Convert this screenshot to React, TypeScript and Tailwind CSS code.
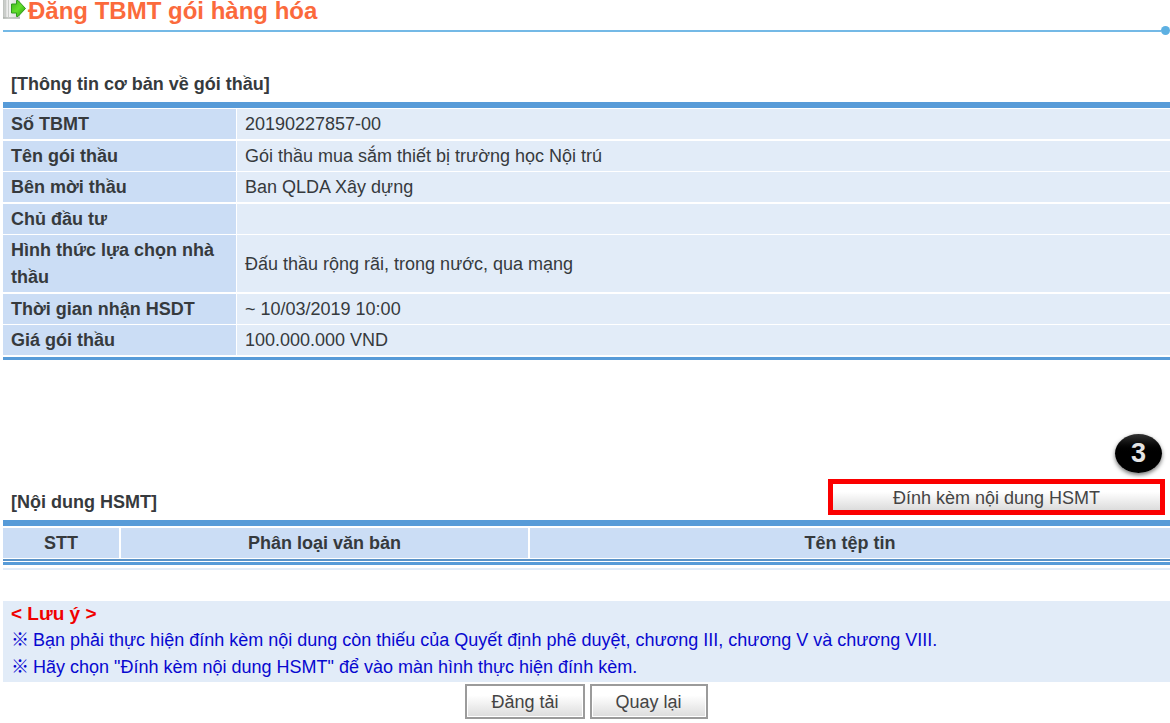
import type { ReactNode } from "react";

const info = [
  { label: "Số TBMT", value: "20190227857-00" },
  { label: "Tên gói thầu", value: "Gói thầu mua sắm thiết bị trường học Nội trú" },
  { label: "Bên mời thầu", value: "Ban QLDA Xây dựng" },
  { label: "Chủ đầu tư", value: "" },
  { label: "Hình thức lựa chọn nhà thầu", value: "Đấu thầu rộng rãi, trong nước, qua mạng" },
  { label: "Thời gian nhận HSDT", value: "~ 10/03/2019 10:00" },
  { label: "Giá gói thầu", value: "100.000.000 VND" },
];

const notes = [
  "Bạn phải thực hiện đính kèm nội dung còn thiếu của Quyết định phê duyệt, chương III, chương V và chương VIII.",
  'Hãy chọn "Đính kèm nội dung HSMT" để vào màn hình thực hiện đính kèm.',
];

function PageIcon() {
  return (
    <svg viewBox="0 0 25 19" className="h-[19px] w-[25px] shrink-0" aria-hidden="true">
      <defs>
        <linearGradient id="arrow" x1="0" y1="0" x2="1" y2="1">
          <stop offset="0" stopColor="#3fae1c" />
          <stop offset="0.5" stopColor="#63e02c" />
          <stop offset="1" stopColor="#1f9a08" />
        </linearGradient>
        <linearGradient id="paper" x1="0" y1="0" x2="1" y2="0">
          <stop offset="0" stopColor="#b9bdb9" />
          <stop offset="0.3" stopColor="#f4f4f4" />
          <stop offset="1" stopColor="#d5d8d5" />
        </linearGradient>
      </defs>
      <path d="M0 0H17V18.5H0Z" fill="url(#paper)" />
      <path d="M2.5 0V17M5.5 0V17" stroke="#c9ccc9" />
      <path d="M0 18H17" stroke="#9aa09a" />
      <path d="M8.5 4H13.5V0.5H15L22.5 8.5L15 16.5H13.5V13H8.5Z" fill="url(#arrow)" stroke="#2f9a1c" strokeLinejoin="round" />
    </svg>
  );
}

function SectionTitle({ children }: { children: ReactNode }) {
  return <h2 className="pl-2 text-[18px] leading-6 font-bold">{children}</h2>;
}

function FormButton({ children }: { children: ReactNode }) {
  return (
    <button
      type="button"
      className="h-[35px] border-2 border-[#9b9b9b] bg-linear-to-b from-white from-30% to-[#dcdcdc] px-6 text-[18px] leading-6 text-[#444] ring-1 ring-white ring-inset"
    >
      {children}
    </button>
  );
}

export default function App() {
  return (
    <main className="bg-white pl-[3px] font-['Liberation_Sans','Noto_Sans_CJK_KR',sans-serif] text-[18px] text-[#363a3d]">
      <header>
        <div className="flex h-[28px] items-start">
          <PageIcon />
          <h1 className="text-[24px] leading-[22px] font-bold text-[#fb6a3c]">Đăng TBMT gói hàng hóa</h1>
        </div>
        <div className="flex h-[5px] items-center">
          <div className="h-[2px] flex-1 bg-[#74b9e6]" />
          <div className="size-[9px] rounded-full bg-[#5db0e2]" />
        </div>
      </header>

      <section className="pt-[39px]">
        <SectionTitle>[Thông tin cơ bản về gói thầu]</SectionTitle>
        <div className="mt-[6px] border-t-[6px] border-b-[3px] border-[#579bd8] pt-px">
          <table className="w-full table-fixed border-separate border-spacing-0 leading-[27px]">
            <colgroup>
              <col className="w-[234px]" />
              <col />
            </colgroup>
            <tbody>
              {info.map((row) => (
                <tr key={row.label} className="group">
                  <th
                    scope="row"
                    className="border-r border-white bg-[#cbddf5] pt-[2px] pr-2 pb-px pl-2 text-left font-bold group-odd:border-b-2 group-even:border-b"
                  >
                    {row.label}
                  </th>
                  <td className="border-white bg-[#e2ecf8] pt-[2px] pb-px pl-2 group-odd:border-b-2 group-even:border-b">
                    {row.value}
                  </td>
                </tr>
              ))}
            </tbody>
          </table>
        </div>
      </section>

      <section className="pt-[119px]">
        <div className="flex items-start justify-between pr-[5px]">
          <div className="pt-[11px]">
            <SectionTitle>[Nội dung HSMT]</SectionTitle>
          </div>
          <div className="relative">
            <button
              type="button"
              className="h-9 w-[337px] border-[5px] border-[#fb0000] bg-linear-to-b from-white from-30% to-[#dcdcdc] pt-px text-[18px] leading-6 text-[#444]"
            >
              Đính kèm nội dung HSMT
            </button>
            <span className="absolute right-[3px] bottom-full mb-[6px] flex h-[39px] w-[47px] items-center justify-center rounded-[50%] bg-linear-to-b from-[#333] to-black to-50% text-[27px] font-bold text-[#e4e4e4] shadow-[0_2px_4px_rgba(0,0,0,0.55)]">
              3
            </span>
          </div>
        </div>
        <div className="mt-[5px] border-t-[6px] border-b-[3px] border-[#579bd8] pt-[2px] pb-px">
          <table className="w-full table-fixed border-separate border-spacing-0 border-b-2 border-[#5b93c8] leading-[27px]">
            <thead>
              <tr>
                <th scope="col" className="w-[118px] border-r-2 border-b border-white bg-[#cbddf5] pt-[2px] pb-px">STT</th>
                <th scope="col" className="w-[409px] border-r-2 border-b border-white bg-[#cbddf5] pt-[2px] pb-px">Phân loại văn bản</th>
                <th scope="col" className="border-b border-white bg-[#cbddf5] pt-[2px] pb-px">Tên tệp tin</th>
              </tr>
            </thead>
          </table>
        </div>
        <div className="mt-[3px] h-[2px] bg-[#e2ecf8]" />
      </section>

      <section className="mt-[31px] bg-[#e2ecf8] pb-px pl-2">
        <h3 className="text-[19px] leading-[26px] font-bold text-[#f00000]">&lt; Lưu ý &gt;</h3>
        {notes.map((note) => (
          <p key={note} className="flex leading-[27px] text-[#0808d0]">
            <span className="w-[22px]">※</span>
            {note}
          </p>
        ))}
      </section>

      <div className="flex justify-center gap-[5px] pt-[2px]">
        <FormButton>Đăng tải</FormButton>
        <FormButton>Quay lại</FormButton>
      </div>
    </main>
  );
}
